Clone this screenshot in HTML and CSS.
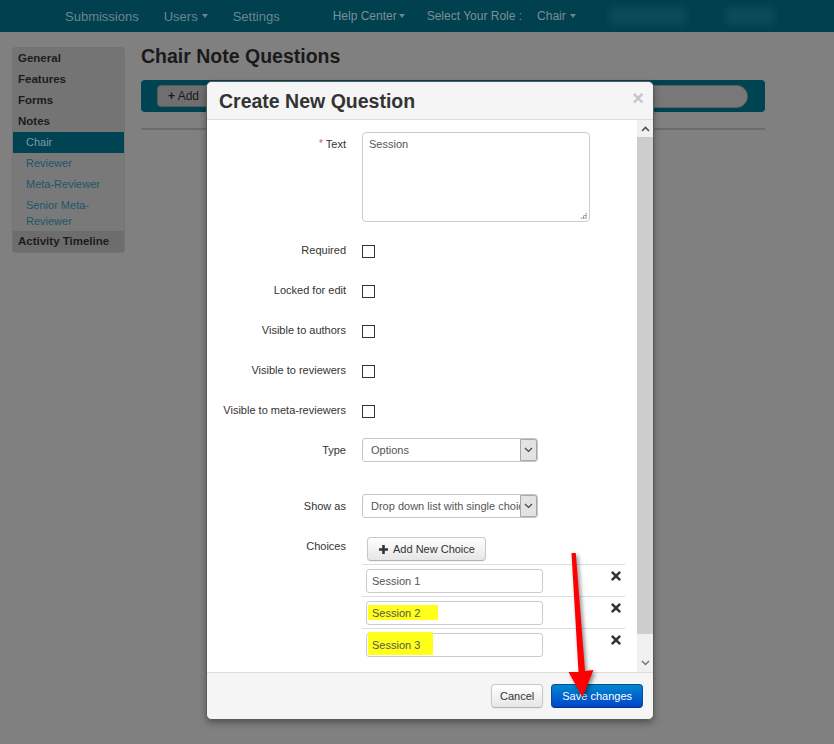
FILE: index.html
```html
<!DOCTYPE html>
<html>
<head>
<meta charset="utf-8">
<title>Chair Note Questions</title>
<link rel="stylesheet" href="styles.css">
</head>
<body>
<header class="topnav">
  <a class="nav-item n-sub">Submissions</a>
  <a class="nav-item n-users">Users <span class="caret"></span></a>
  <a class="nav-item n-settings">Settings</a>
  <a class="nav-item alt n-help">Help Center<span class="caret tight"></span></a>
  <span class="nav-item alt n-role">Select Your Role :</span>
  <a class="nav-item alt n-chair">Chair <span class="caret"></span></a>
  <span class="blurbox b1"></span>
  <span class="blurbox b2"></span>
</header>

<div class="page">
  <aside class="sidenav">
    <div class="sec">General</div>
    <div class="sec">Features</div>
    <div class="sec">Forms</div>
    <div class="sec">Notes</div>
    <ul class="sub">
      <li class="active">Chair</li>
      <li>Reviewer</li>
      <li>Meta-Reviewer</li>
      <li class="two">Senior Meta-Reviewer</li>
    </ul>
    <div class="sec last">Activity Timeline</div>
  </aside>
  <main class="content">
    <h2 class="page-title">Chair Note Questions</h2>
    <div class="toolbar">
      <span class="tb-btn"><span class="tb-plus">+</span> Add</span>
      <span class="search"></span>
    </div>
    <div class="rule"></div>
  </main>
</div>

<div class="modal">
  <div class="m-head">
    <h3 class="m-title">Create New Question</h3>
    <span class="m-close">×</span>
  </div>
  <div class="m-body">
    <div class="m-scroll">
      <div class="frow r-text">
        <label class="lbl"><span class="req">*</span> Text</label>
        <div class="textarea">Session<span class="grip"></span></div>
      </div>
      <div class="frow r-check">
        <label class="lbl">Required</label>
        <div><span class="cbox"></span></div>
      </div>
      <div class="frow r-check">
        <label class="lbl">Locked for edit</label>
        <div><span class="cbox"></span></div>
      </div>
      <div class="frow r-check">
        <label class="lbl">Visible to authors</label>
        <div><span class="cbox"></span></div>
      </div>
      <div class="frow r-check">
        <label class="lbl">Visible to reviewers</label>
        <div><span class="cbox"></span></div>
      </div>
      <div class="frow r-check">
        <label class="lbl">Visible to meta-reviewers</label>
        <div><span class="cbox"></span></div>
      </div>
      <div class="frow r-type">
        <label class="lbl">Type</label>
        <div class="select"><span class="val">Options</span><span class="arr"><svg width="9" height="6" viewBox="0 0 9 6"><path d="M1 1 L4.5 4.5 L8 1" fill="none" stroke="#444" stroke-width="1.2"/></svg></span></div>
      </div>
      <div class="frow r-show">
        <label class="lbl">Show as</label>
        <div class="select"><span class="val">Drop down list with single choice</span><span class="arr"><svg width="9" height="6" viewBox="0 0 9 6"><path d="M1 1 L4.5 4.5 L8 1" fill="none" stroke="#444" stroke-width="1.2"/></svg></span></div>
      </div>
      <div class="frow r-choices">
        <label class="lbl">Choices</label>
        <div class="choices">
          <span class="btn add-choice"><svg class="plus" width="9" height="9" viewBox="0 0 9 9"><path d="M3.2 0h2.6v3.2H9v2.6H5.8V9H3.2V5.8H0V3.2h3.2z" fill="#333"/></svg>Add New Choice</span>
          <div class="crow">
            <div class="cinput"><span class="ctext">Session 1</span></div>
            <svg class="del" width="10" height="10" viewBox="0 0 10 10"><path d="M1.6 1.6L8.4 8.4M8.4 1.6L1.6 8.4" stroke="#333" stroke-width="2.6" stroke-linecap="round"/></svg>
          </div>
          <div class="crow">
            <div class="cinput"><span class="hl hl2"></span><span class="ctext">Session 2</span></div>
            <svg class="del" width="10" height="10" viewBox="0 0 10 10"><path d="M1.6 1.6L8.4 8.4M8.4 1.6L1.6 8.4" stroke="#333" stroke-width="2.6" stroke-linecap="round"/></svg>
          </div>
          <div class="crow">
            <div class="cinput"><span class="hl hl3"></span><span class="ctext">Session 3</span></div>
            <svg class="del" width="10" height="10" viewBox="0 0 10 10"><path d="M1.6 1.6L8.4 8.4M8.4 1.6L1.6 8.4" stroke="#333" stroke-width="2.6" stroke-linecap="round"/></svg>
          </div>
        </div>
      </div>
    </div>
    <div class="vscroll">
      <span class="sb-btn up"><svg width="9" height="6" viewBox="0 0 9 6"><path d="M1 5 L4.5 1.5 L8 5" fill="none" stroke="#505050" stroke-width="1.6"/></svg></span>
      <span class="sb-thumb"></span>
      <span class="sb-track"></span>
      <span class="sb-btn down"><svg width="9" height="6" viewBox="0 0 9 6"><path d="M1 1 L4.5 4.5 L8 1" fill="none" stroke="#707070" stroke-width="1.4"/></svg></span>
    </div>
  </div>
  <div class="m-foot">
    <span class="btn cancel">Cancel</span>
    <span class="btn primary">Save changes</span>
  </div>
</div>

<svg class="annot" width="834" height="744" viewBox="0 0 834 744">
  <polygon points="571.5,553 575.8,553 585,671 593.5,670 582.5,697 568.5,672 578.5,672" fill="#ff0000"/>
</svg>
</body>
</html>
```

FILE: styles.css
```css
* { box-sizing: border-box; }

html, body {
  margin: 0;
  padding: 0;
}

body {
  width: 834px;
  height: 744px;
  overflow: hidden;
  position: relative;
  background: #808080;
  font-family: "Liberation Sans", Arial, sans-serif;
  color: #1b1b1b;
}

/* ---------- top navigation ---------- */
.topnav {
  height: 32px;
  background: #00404f;
  display: flex;
  align-items: center;
  padding-left: 65px;
  font-size: 13px;
  color: #6a8790;
  white-space: nowrap;
}
.nav-item { display: inline-flex; align-items: center; }
.nav-item.alt { font-size: 12px; color: #7b9096; }
.n-users { margin-left: 25px; }
.n-settings { margin-left: 25px; }
.n-help { margin-left: 53px; }
.n-role { margin-left: 22px; }
.n-chair { margin-left: 15px; }
.caret {
  display: inline-block;
  width: 0;
  height: 0;
  margin-left: 4px;
  border-top: 4px solid #6a8790;
  border-left: 3.5px solid transparent;
  border-right: 3.5px solid transparent;
}
.caret.tight { margin-left: 2px; }
.blurbox {
  height: 18px;
  background: #0a4b59;
  filter: blur(3px);
  border-radius: 3px;
}
.b1 { width: 76px; margin-left: 34px; }
.b2 { width: 48px; margin-left: 40px; }

/* ---------- page ---------- */
.page {
  display: flex;
  align-items: flex-start;
  gap: 17px;
  padding: 16px 0 0 13px;
}

.sidenav {
  width: 111px;
  background: #767676;
  border-radius: 3px;
  overflow: hidden;
  box-shadow: 0 0 0 1px #737373;
}
.sec {
  font-size: 11.5px;
  font-weight: bold;
  line-height: 21px;
  padding-left: 5px;
  color: #1c1c1c;
  background: #747474;
}
.sec.last { background: #6d6d6d; }
.sub {
  list-style: none;
  margin: 0;
  padding: 0;
  background: #797979;
}
.sub li {
  font-size: 11px;
  line-height: 21px;
  padding: 0 8px 0 13px;
  color: #1b5867;
}
.sub li.active {
  background: #004352;
  color: #7f9ba3;
}
.sub li.two {
  line-height: 16px;
  padding-top: 2px;
  padding-bottom: 2px;
}

.content { width: 624px; }
.page-title {
  margin: -4px 0 12px;
  font-size: 19.5px;
  line-height: 24px;
  font-weight: bold;
  color: #1a1a1a;
}
.toolbar {
  height: 32px;
  background: #004351;
  border-radius: 4px;
  display: flex;
  align-items: center;
  padding: 0 17px 0 16px;
  gap: 12px;
}
.tb-btn {
  height: 22px;
  width: 110px;
  flex: none;
  background: #6f6f6f;
  border: 1px solid #5a5a5a;
  border-radius: 4px;
  font-size: 12px;
  line-height: 20px;
  padding-left: 10px;
  color: #1a1a1a;
}
.tb-plus { font-weight: bold; }
.search {
  flex: 1;
  height: 23px;
  border-radius: 12px;
  background: #787878;
  border: 1px solid #5e5e5e;
}
.rule {
  margin-top: 16px;
  height: 2px;
  background: #6c6c6c;
}

/* ---------- modal ---------- */
.modal {
  position: absolute;
  left: 206px;
  top: 81px;
  width: 448px;
  height: 639px;
  background: #fff;
  border: 1px solid #5a5a5a;
  border-radius: 6px;
  box-shadow: 0 3px 7px rgba(0, 0, 0, 0.35);
  display: flex;
  flex-direction: column;
  overflow: hidden;
  color: #333;
}
.m-head {
  height: 38px;
  flex: none;
  background: #f5f5f5;
  border-bottom: 1px solid #dddddd;
  display: flex;
  align-items: center;
  padding: 0 9px 0 12px;
}
.m-title {
  margin: 0;
  font-size: 19.5px;
  font-weight: bold;
  color: #333;
  line-height: 24px;
}
.m-close {
  margin-left: auto;
  margin-top: -6px;
  font-size: 20px;
  font-weight: bold;
  color: #c4c6c8;
  line-height: 20px;
}

.m-body {
  height: 552px;
  flex: none;
  display: flex;
}
.m-scroll {
  flex: 1;
  overflow: hidden;
  padding-top: 12px;
}
.vscroll {
  width: 16px;
  flex: none;
  display: flex;
  flex-direction: column;
  background: #f0f0f0;
}
.sb-btn {
  height: 17px;
  flex: none;
  display: flex;
  align-items: center;
  justify-content: center;
}
.sb-btn.down { height: 18px; }
.sb-thumb {
  height: 497px;
  flex: none;
  background: #cdcdcd;
}
.sb-track { flex: 1; }

.frow {
  display: grid;
  grid-template-columns: 139px 1fr;
  column-gap: 16px;
  align-items: start;
}
.lbl {
  text-align: right;
  font-size: 11px;
  line-height: 16px;
  color: #333;
}
.req { color: #b9615f; font-size: 10px; vertical-align: 1px; }

.r-text .lbl { padding-top: 4px; }
.textarea {
  position: relative;
  width: 228px;
  height: 90px;
  border: 1px solid #cccccc;
  border-radius: 4px;
  padding: 3px 6px;
  font-size: 11px;
  line-height: 16px;
  color: #555;
}
.grip {
  position: absolute;
  right: 2px;
  bottom: 2px;
  width: 7px;
  height: 7px;
  background:
    radial-gradient(circle, #999 0.8px, transparent 1px) 0 0 / 2.4px 2.4px;
  clip-path: polygon(100% 0, 100% 100%, 0 100%);
}

.r-check { margin-top: 20px; height: 20px; }
.r-text + .r-check { margin-top: 20px; }
.cbox {
  display: block;
  margin-top: 3px;
  width: 13px;
  height: 13px;
  border: 1px solid #333;
  background: #fff;
}

.r-type { margin-top: 16px; }
.r-show { margin-top: 32px; }
.r-type .lbl, .r-show .lbl { padding-top: 4px; }
.select {
  width: 176px;
  height: 24px;
  border: 1px solid #c6c6c6;
  border-radius: 3px;
  display: flex;
  overflow: hidden;
  font-size: 11px;
  color: #555;
}
.select .val {
  flex: 1;
  overflow: hidden;
  white-space: nowrap;
  padding-left: 8px;
  line-height: 22px;
}
.select .arr {
  width: 17px;
  flex: none;
  background: #e3e3e3;
  border: 1px solid #a8a8a8;
  border-radius: 0 2px 2px 0;
  display: flex;
  align-items: center;
  justify-content: center;
}

.r-choices { margin-top: 19px; }
.r-choices .lbl { padding-top: 1px; }

.btn {
  display: inline-flex;
  align-items: center;
  height: 24px;
  font-size: 11px;
  border-radius: 4px;
  white-space: nowrap;
}
.add-choice {
  margin-left: 5px;
  margin-bottom: 3px;
  padding: 0 10px 0 11px;
  background: linear-gradient(#ffffff, #e6e6e6);
  border: 1px solid #c8c8c8;
  border-bottom-color: #b3b3b3;
  color: #333;
  box-shadow: 0 1px 2px rgba(0, 0, 0, 0.05);
}
.add-choice .plus { margin-right: 5px; }

.choices { width: 263px; }
.crow {
  height: 32px;
  border-top: 1px solid #dddddd;
  padding: 4px 4px 0 4px;
  display: flex;
  align-items: flex-start;
}
.cinput {
  position: relative;
  width: 177px;
  height: 24px;
  border: 1px solid #cccccc;
  border-radius: 3px;
  padding-left: 5px;
  font-size: 11px;
  line-height: 22px;
  color: #555;
  background: #fff;
}
.ctext { position: relative; z-index: 1; }
.hl {
  position: absolute;
  background: #ffff1a;
  z-index: 0;
}
.hl2 { left: 1px; top: 3px; width: 70px; height: 15px; }
.hl3 { left: 1px; top: -2px; width: 65px; height: 23px; }
.del { margin-left: auto; margin-top: 2px; margin-right: 0; }

.m-foot {
  flex: 1;
  background: #f5f5f5;
  border-top: 1px solid #dddddd;
  display: flex;
  justify-content: flex-end;
  align-items: center;
  gap: 8px;
  padding-right: 10px;
}
.cancel {
  padding: 0 8px;
  background: linear-gradient(#ffffff, #e6e6e6);
  border: 1px solid #c8c8c8;
  border-bottom-color: #b3b3b3;
  color: #333;
  box-shadow: 0 1px 2px rgba(0, 0, 0, 0.05);
}
.primary {
  padding: 0 10px;
  background: linear-gradient(#0088cc, #0044cc);
  border: 1px solid #0a4a9a;
  border-bottom-color: #06357a;
  color: #fff;
}

.annot {
  position: absolute;
  left: 0;
  top: 0;
  pointer-events: none;
  filter: drop-shadow(2px 2px 2px rgba(0, 0, 0, 0.45));
}
```
